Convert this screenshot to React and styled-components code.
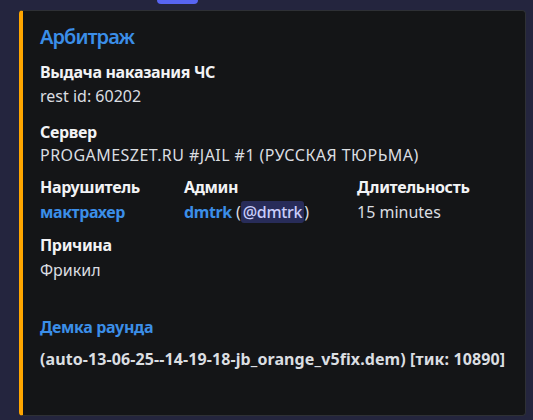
import React from "react";
import styled, { createGlobalStyle } from "styled-components";

const Global = createGlobalStyle`
  html, body { margin: 0; padding: 0; background: #24253e; }
  body { font-family: "Noto Sans", "Open Sans", sans-serif; width: 533px; height: 420px; overflow: hidden; }
`;

const Page = styled.div`
  display: flex;
  flex-direction: column;
  padding: 0 7px 4px 19px;
`;

const TopStrip = styled.div`
  height: 10px;
  display: flex;
  align-items: flex-start;
`;

const Tab = styled.div`
  margin-left: 138px;
  width: 41px;
  height: 4px;
  background: #5865f2;
  border-radius: 0 0 6px 6px;
`;

const Card = styled.div`
  background: #141517;
  border: 1px solid #2e3035;
  border-left: 4px solid #ffa600;
  border-radius: 4px;
  padding: 13px 16px 45px 17px;
  display: flex;
  flex-direction: column;
`;

const Title = styled.div`
  font-size: 20px;
  line-height: 26px;
  font-weight: 600;
  letter-spacing: -0.9px;
  color: #3b8ee8;
`;

const Field = styled.div`
  display: flex;
  flex-direction: column;
  margin-top: ${(p) => p.$top}px;
`;

const Name = styled.div`
  font-size: 16px;
  line-height: 22px;
  font-weight: 700;
  letter-spacing: -0.35px;
  color: ${(p) => (p.$link ? "#3b8ee8" : "#f2f3f5")};
`;

const Value = styled.div`
  font-size: 16px;
  line-height: 22px;
  font-weight: ${(p) => (p.$bold ? 700 : 400)};
  letter-spacing: ${(p) => (p.$wide ? "0.45px" : p.$bold ? "0.1px" : "0")};
  color: #dbdee1;
  margin-top: ${(p) => p.$gap}px;
  white-space: nowrap;
`;

const Link = styled.span`
  color: #3b8ee8;
  font-weight: 700;
  letter-spacing: -0.4px;
`;

const Mention = styled.span`
  background: rgba(88, 101, 242, 0.3);
  color: #c9cdfb;
  border-radius: 3px;
  padding: 0 2px;
  font-weight: 500;
  letter-spacing: -0.3px;
`;

const InlineRow = styled.div`
  display: grid;
  grid-template-columns: 136px 165px auto;
  column-gap: 8px;
  margin-top: 10px;
`;

export default function App() {
  return (
    <>
      <Global />
      <Page>
        <TopStrip>
          <Tab />
        </TopStrip>
        <Card>
          <Title>Арбитраж</Title>
          <Field $top={11}>
            <Name>Выдача наказания ЧС</Name>
            <Value $gap={2}>rest id: 60202</Value>
          </Field>
          <Field $top={14}>
            <Name>Сервер</Name>
            <Value $gap={1} $wide>PROGAMESZET.RU #JAIL #1 (РУССКАЯ ТЮРЬМА)</Value>
          </Field>
          <InlineRow>
            <Field $top={0}>
              <Name>Нарушитель</Name>
              <Value $gap={3}>
                <Link>мактрахер</Link>
              </Value>
            </Field>
            <Field $top={0}>
              <Name>Админ</Name>
              <Value $gap={3}>
                <Link>dmtrk</Link> (<Mention>@dmtrk</Mention>)
              </Value>
            </Field>
            <Field $top={0}>
              <Name>Длительность</Name>
              <Value $gap={3}>15 minutes</Value>
            </Field>
          </InlineRow>
          <Field $top={11}>
            <Name>Причина</Name>
            <Value $gap={3}>Фрикил</Value>
          </Field>
          <Field $top={35}>
            <Name $link>Демка раунда</Name>
            <Value $gap={10} $bold>
              (auto-13-06-25--14-19-18-jb_orange_v5fix.dem) [тик: 10890]
            </Value>
          </Field>
        </Card>
      </Page>
    </>
  );
}
